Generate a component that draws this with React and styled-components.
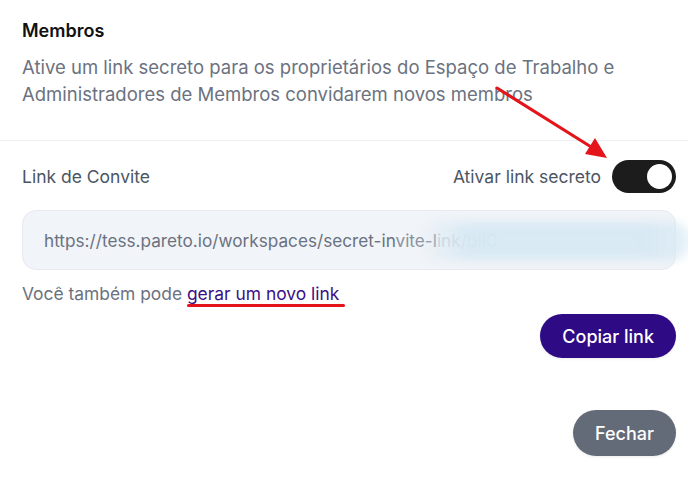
import React from "react";
import styled, { createGlobalStyle } from "styled-components";

const Global = createGlobalStyle`
  html, body { margin: 0; padding: 0; background: #ffffff; }
  body { font-family: Inter, "Noto Sans", "Liberation Sans", sans-serif; -webkit-font-smoothing: antialiased; }
  * { box-sizing: border-box; }
`;

const Page = styled.div`
  position: relative;
  width: 688px;
  height: 488px;
  overflow: hidden;
  background: #fff;
`;

const Header = styled.div`
  padding: 19px 12px 32px 22px;
`;

const Title = styled.div`
  font-size: 18px;
  line-height: 24px;
  font-weight: 600;
  color: #111111;
`;

const Description = styled.p`
  margin: 11px 0 0;
  font-size: 18.5px;
  line-height: 27px;
  color: #6b7280;
`;

const Divider = styled.hr`
  margin: 0;
  border: 0;
  border-top: 1px solid #eceef1;
`;

const Section = styled.div`
  padding: 19px 12px 0 22px;
  display: flex;
  flex-direction: column;
`;

const Row = styled.div`
  display: flex;
  align-items: center;
  justify-content: space-between;
  height: 33px;
`;

const Label = styled.span`
  font-size: 17.5px;
  color: #4b5563;
`;

const ToggleGroup = styled.div`
  display: flex;
  align-items: center;
  gap: 11px;
`;

const Switch = styled.div`
  width: 64px;
  height: 33px;
  border-radius: 17px;
  background: #1c1c1c;
  padding: 4px;
  display: flex;
  justify-content: ${(p) => (p.$on ? "flex-end" : "flex-start")};
`;

const Knob = styled.div`
  width: 25px;
  height: 25px;
  border-radius: 50%;
  background: #ffffff;
`;

const InputBox = styled.div`
  position: relative;
  margin-top: 17px;
  height: 60px;
  border-radius: 14px;
  background: #f1f4f8;
  border: 1px solid #e6e9ee;
  display: flex;
  align-items: center;
  padding: 0 21px;
  overflow: visible;
`;

const InputText = styled.span`
  font-size: 17.2px;
  color: #6b7280;
  white-space: nowrap;
  overflow: hidden;
`;

const Faded = styled.span`
  color: ${(p) => p.$tone};
`;

const Smudge = styled.div`
  position: absolute;
  left: 395px;
  right: -16px;
  top: 11px;
  height: 38px;
  border-radius: 19px;
  background: linear-gradient(90deg, rgba(214, 232, 243, 0) 0%, rgba(214, 232, 243, 0.9) 18%, rgba(214, 232, 243, 0.9) 85%, rgba(214, 232, 243, 0.6) 100%);
  filter: blur(5px);
`;

const Helper = styled.div`
  margin-top: 12px;
  font-size: 17.4px;
  line-height: 24px;
  color: #6b7280;
`;

const HelperLink = styled.a`
  position: relative;
  color: #3b0f86;
  text-decoration: none;
  &::after {
    content: "";
    position: absolute;
    left: 0;
    right: -6px;
    bottom: -3px;
    height: 3px;
    border-radius: 2px;
    background: #e3151b;
  }
`;

const Actions = styled.div`
  display: flex;
  justify-content: flex-end;
  margin-top: ${(p) => p.$top}px;
`;

const Button = styled.button`
  border: 0;
  border-radius: 23px;
  height: ${(p) => p.$h}px;
  padding: 0 ${(p) => p.$px}px;
  font-family: inherit;
  font-size: 18px;
  font-weight: 500;
  color: #ffffff;
  background: ${(p) => (p.$variant === "primary" ? "#2e0a85" : "#646b78")};
  box-shadow: 0 1px 3px rgba(0, 0, 0, 0.08);
  cursor: pointer;
`;

const ArrowLayer = styled.svg`
  position: absolute;
  left: 0;
  top: 0;
  pointer-events: none;
`;

export default function App() {
  return (
    <Page>
      <Global />
      <Header>
        <Title>Membros</Title>
        <Description>
          Ative um link secreto para os proprietários do Espaço de Trabalho e
          <br />
          Administradores de Membros convidarem novos membros
        </Description>
      </Header>
      <Divider />
      <Section>
        <Row>
          <Label>Link de Convite</Label>
          <ToggleGroup>
            <Label>Ativar link secreto</Label>
            <Switch $on>
              <Knob />
            </Switch>
          </ToggleGroup>
        </Row>
        <InputBox>
          <InputText>
            https://tess.pareto.io/workspaces/secret-in
            <Faded $tone="#8a919c">vite-l</Faded>
            <Faded $tone="#c3cad3">ink/bllC</Faded>
          </InputText>
          <Smudge />
        </InputBox>
        <Helper>
          Você também pode <HelperLink href="#">gerar um novo link</HelperLink>
        </Helper>
        <Actions $top={8}>
          <Button $variant="primary" $h={44} $px={22}>Copiar link</Button>
        </Actions>
        <Actions $top={52}>
          <Button $variant="secondary" $h={46} $px={22}>Fechar</Button>
        </Actions>
      </Section>
      <ArrowLayer width="688" height="488" viewBox="0 0 688 488">
        <line x1="497" y1="88" x2="596" y2="150" stroke="#e3151b" strokeWidth="3" strokeLinecap="round" />
        <polygon points="607,158 585,154 595,138" fill="#e3151b" />
      </ArrowLayer>
    </Page>
  );
}
